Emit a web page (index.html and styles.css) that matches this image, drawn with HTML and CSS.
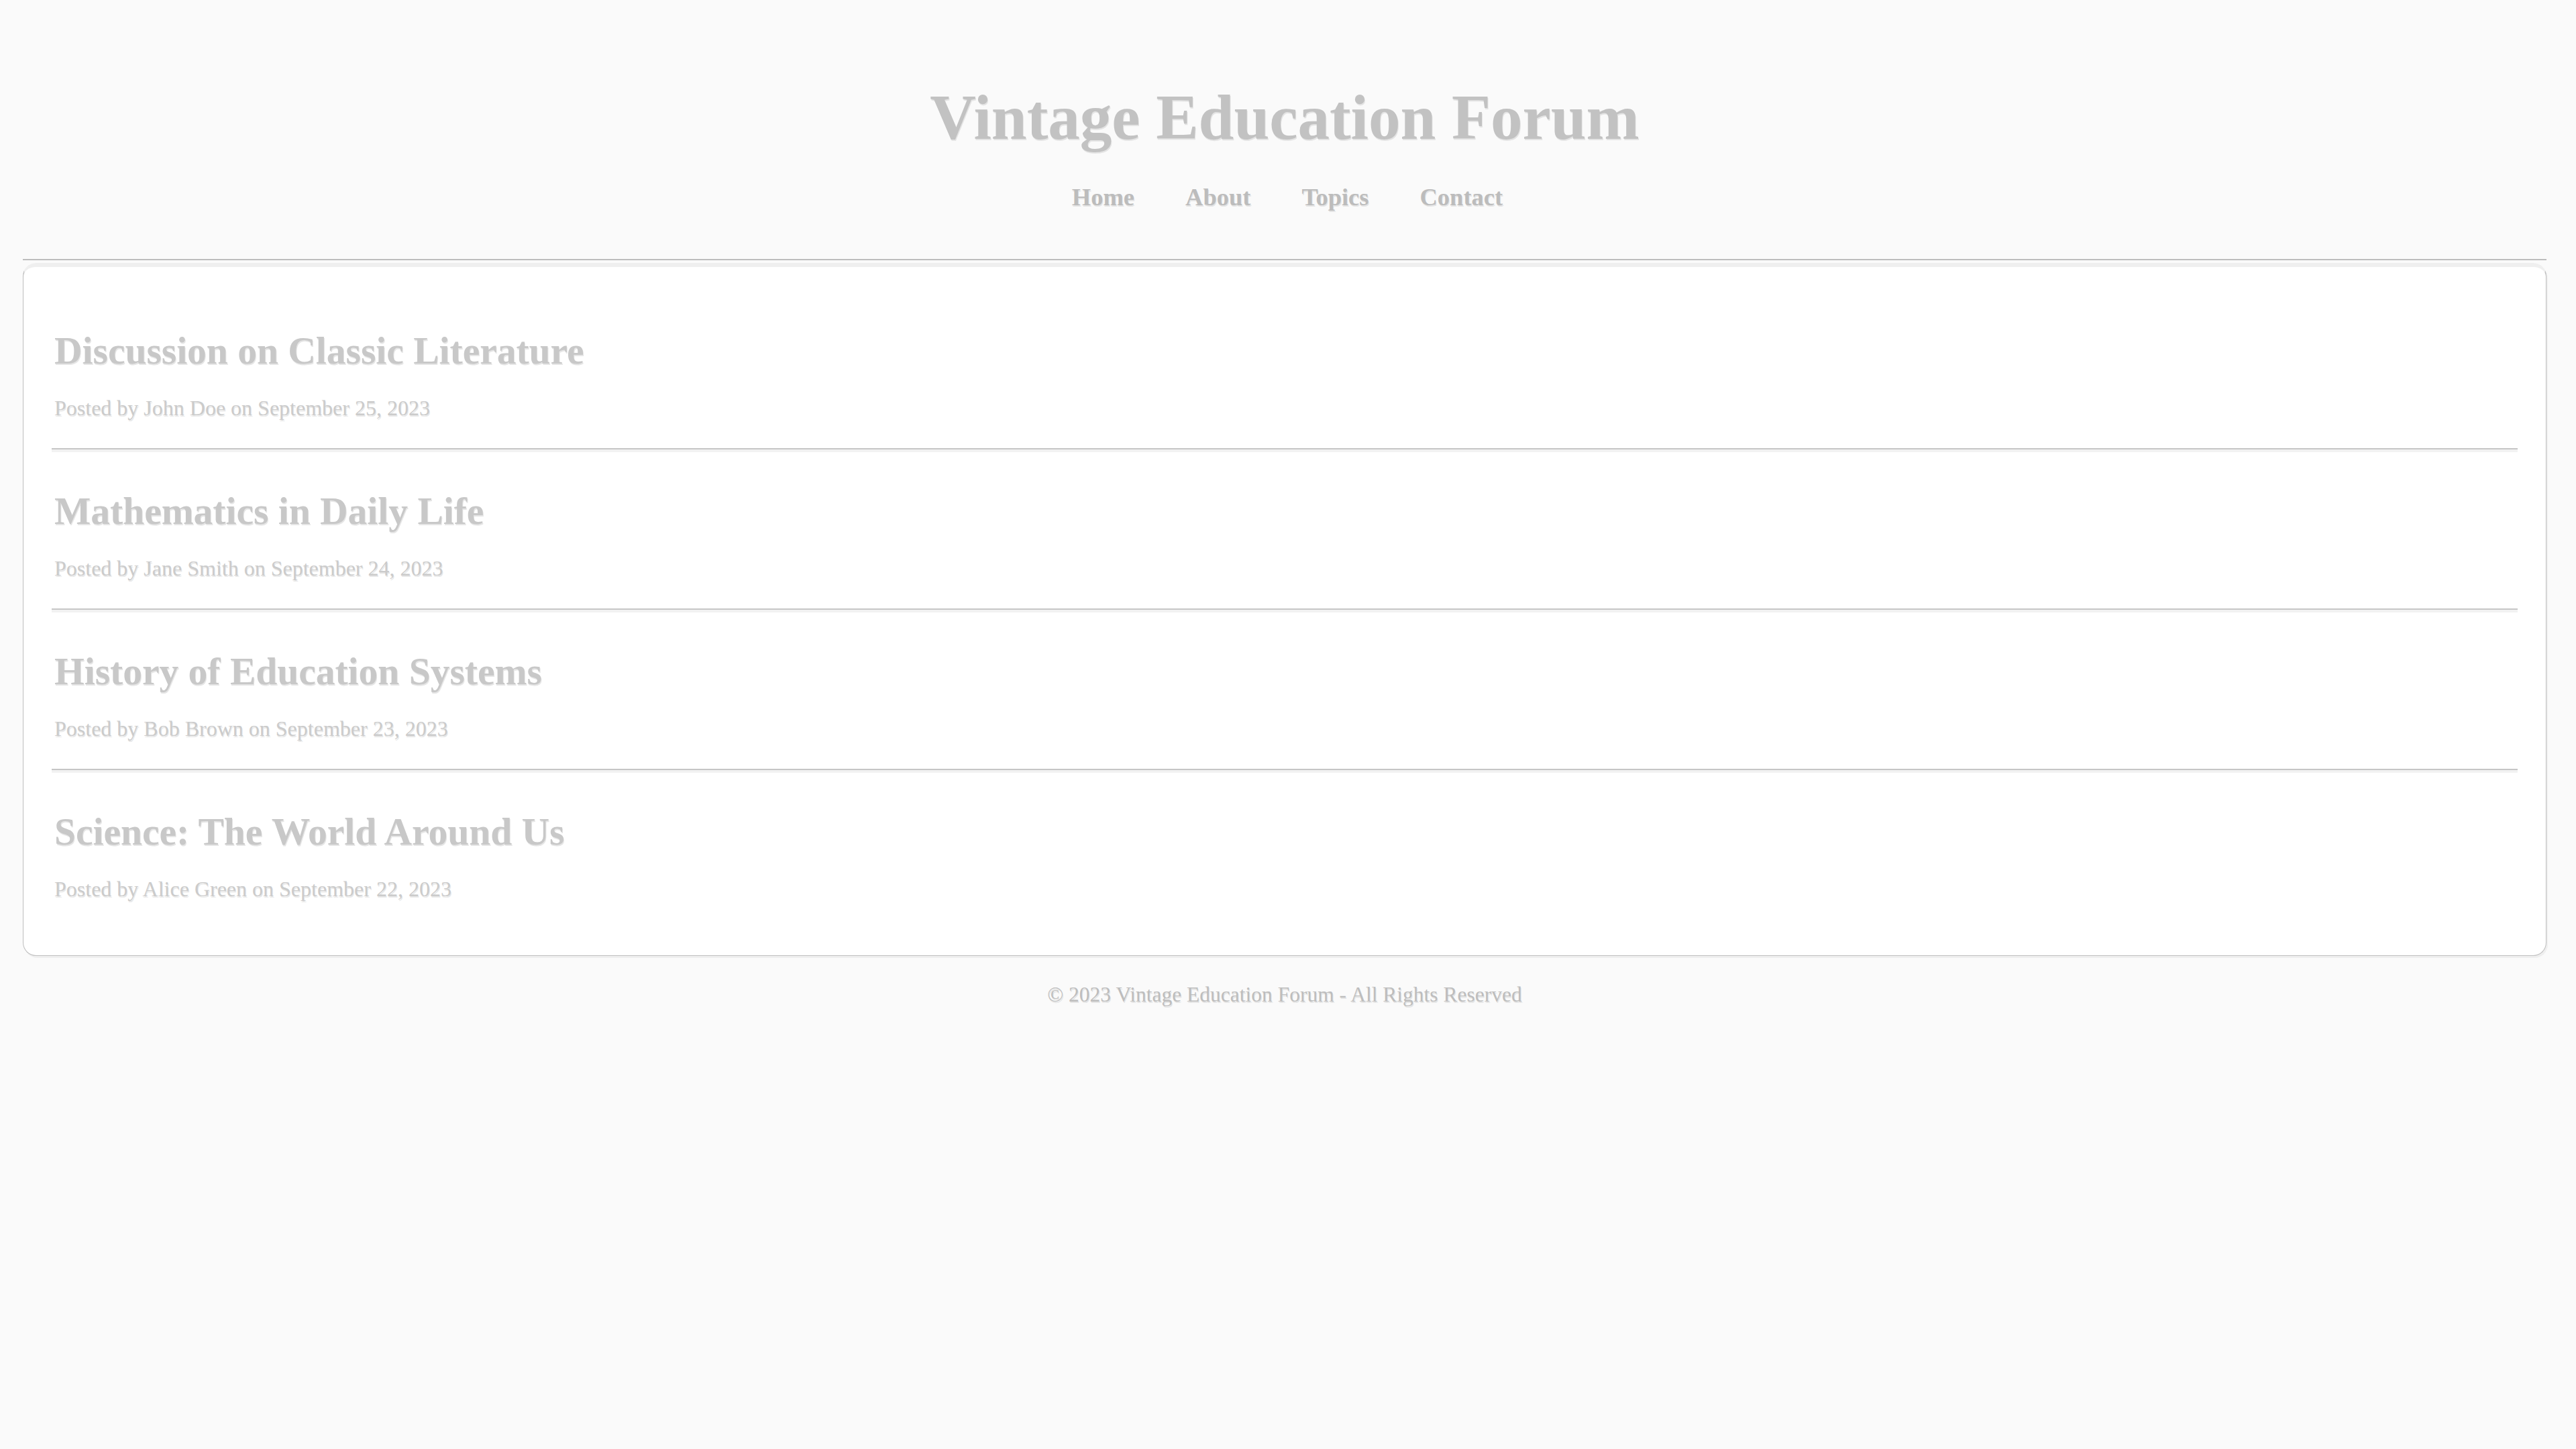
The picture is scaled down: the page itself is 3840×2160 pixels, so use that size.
FILE: index.html
```html
<!DOCTYPE html>
<html lang="en">
<head>
<meta charset="utf-8">
<title>Vintage Education Forum</title>
<link rel="stylesheet" href="styles.css">
</head>
<body>
<div class="page">
  <header class="site-header">
    <h1 class="site-title">Vintage Education Forum</h1>
    <nav class="site-nav">
      <a class="nav-link" href="#">Home</a>
      <a class="nav-link" href="#">About</a>
      <a class="nav-link" href="#">Topics</a>
      <a class="nav-link" href="#">Contact</a>
    </nav>
  </header>
  <main class="card">
    <article class="post">
      <h2 class="post-title">Discussion on Classic Literature</h2>
      <p class="post-meta">Posted by John Doe on September 25, 2023</p>
    </article>
    <article class="post">
      <h2 class="post-title">Mathematics in Daily Life</h2>
      <p class="post-meta">Posted by Jane Smith on September 24, 2023</p>
    </article>
    <article class="post">
      <h2 class="post-title">History of Education Systems</h2>
      <p class="post-meta">Posted by Bob Brown on September 23, 2023</p>
    </article>
    <article class="post">
      <h2 class="post-title">Science: The World Around Us</h2>
      <p class="post-meta">Posted by Alice Green on September 22, 2023</p>
    </article>
  </main>
  <footer class="site-footer">© 2023 Vintage Education Forum - All Rights Reserved</footer>
</div>
</body>
</html>
```
FILE: styles.css
```css
html, body {
  margin: 0;
  padding: 0;
  background: #fafafa;
}

body {
  font-family: "Liberation Serif", "Times New Roman", serif;
  color: #c4c4c4;
}

.page {
  margin: 0 44px 0 34px;
}

.site-header {
  padding: 120px 0 70px;
  text-align: center;
  border-bottom: 2px solid #bdbdbd;
}

.site-title {
  margin: 0;
  font-size: 95px;
  line-height: 110px;
  font-weight: bold;
  color: #c2c2c2;
  text-shadow: 1px 2px 0 #e4e4e4;
}

.site-nav {
  margin-top: 42px;
  display: flex;
  justify-content: center;
  gap: 76px;
  line-height: 44px;
  padding-left: 8px;
}

.nav-link {
  font-size: 36.5px;
  font-weight: bold;
  color: #bcbcbc;
  text-decoration: none;
  text-shadow: 1px 2px 0 #e4e4e4;
}

.card {
  display: block;
  margin-top: 4px;
  background: #ffffff;
  border: 1px solid #bdbdbd;
  border-top: 6px solid #efefef;
  border-radius: 20px;
  box-shadow: 2px 3px 0 #efefef;
  padding: 33px 42px 39px;
}

.post {
  padding: 58px 0 40px 4px;
  border-bottom: 2px solid #c6c6c6;
  box-shadow: 0 4px 0 #f2f2f2;
}

.post:last-child {
  border-bottom: none;
  box-shadow: none;
}

.post-title {
  margin: 0;
  font-size: 57.5px;
  line-height: 68px;
  font-weight: bold;
  color: #c8c8c8;
  text-shadow: 1px 2px 0 #e6e6e6;
}

.post-meta {
  margin: 31px 0 0;
  font-size: 32px;
  line-height: 40px;
  color: #cbcbcb;
  text-shadow: 1px 2px 0 #e8e8e8;
}

.site-footer {
  padding-top: 38px;
  text-align: center;
  font-size: 31.5px;
  line-height: 40px;
  color: #bdbdbd;
  text-shadow: 1px 2px 0 #e4e4e4;
}
```
